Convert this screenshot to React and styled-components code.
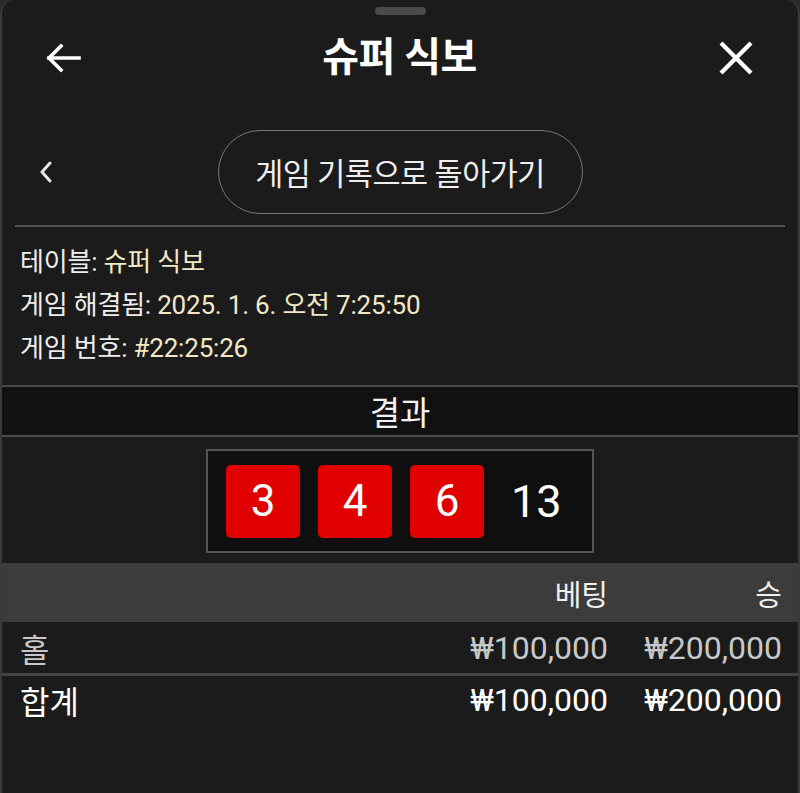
import React from "react";
import styled, { createGlobalStyle } from "styled-components";

const Global = createGlobalStyle`
  html, body { margin: 0; padding: 0; background: #2a2a2a; }
  body { font-family: Roboto, "Noto Sans CJK KR", sans-serif; }
  * { box-sizing: border-box; }
`;

const Sheet = styled.div`
  width: 800px;
  height: 793px;
  background: #1b1b1b;
  border-left: 2px solid #3a3a3a;
  border-right: 2px solid #3a3a3a;
  border-top-left-radius: 14px;
  border-top-right-radius: 14px;
  overflow: hidden;
  display: flex;
  flex-direction: column;
  color: #fff;
`;

const Handle = styled.div`
  width: 51px;
  height: 8px;
  border-radius: 4px;
  background: #4a4a4a;
  margin: 7px auto 0;
`;

const Header = styled.div`
  height: 86px;
  display: grid;
  grid-template-columns: 90px 1fr 90px;
  align-items: center;
  padding: 0 44px 0 43px;
`;

const Title = styled.h1`
  margin: 0;
  text-align: center;
  font-size: 40px;
  font-weight: 700;
  color: #fff;
  letter-spacing: -0.5px;
  line-height: 1;
`;

const IconBtn = styled.div`
  display: flex;
  align-items: center;
  justify-content: ${(p) => (p.$right ? "flex-end" : "flex-start")};
`;

const BackRow = styled.div`
  position: relative;
  display: flex;
  justify-content: center;
  align-items: center;
  padding: 29px 0 11px;
  margin: 0 13px;
  border-bottom: 2px solid #555;
`;

const Chevron = styled.div`
  position: absolute;
  left: 24px;
  top: calc(50% + 9px);
  transform: translateY(-50%);
  display: flex;
`;

const Pill = styled.div`
  width: 365px;
  height: 84px;
  border: 1.5px solid #777;
  border-radius: 42px;
  display: flex;
  align-items: center;
  justify-content: center;
  font-size: 30.5px;
  color: #eee;
  letter-spacing: -0.5px;
`;

const Info = styled.div`
  padding: 14px 18px 15px;
  display: flex;
  flex-direction: column;
  border-bottom: 2px solid #4a4a4a;
`;

const InfoLine = styled.div`
  font-size: 26px;
  line-height: 43px;
  color: #eee;
  letter-spacing: -0.2px;
`;

const Value = styled.span`
  color: #f2e8c6;
`;

const ResultBar = styled.div`
  height: 50px;
  background: #111;
  border-bottom: 2px solid #4a4a4a;
  display: flex;
  align-items: center;
  justify-content: center;
  font-size: 33px;
  color: #f2f2f2;
`;

const DiceArea = styled.div`
  display: flex;
  justify-content: center;
  padding: 12px 0 10px;
`;

const DiceBox = styled.div`
  width: 388px;
  height: 104px;
  background: #0f0f0f;
  border: 2px solid #555;
  display: flex;
  align-items: center;
  padding: 0 18px;
  gap: 18px;
`;

const Die = styled.div`
  width: 74px;
  height: 73px;
  border-radius: 5px;
  background: #e00000;
  display: flex;
  align-items: center;
  justify-content: center;
  font-size: 44px;
  color: #fff;
`;

const Sum = styled.div`
  font-size: 45px;
  color: #fff;
  margin-left: 9px;
`;

const TableRow = styled.div`
  display: grid;
  grid-template-columns: 1fr 160px 174px;
  align-items: center;
  padding: 0 16px 0 18px;
  height: ${(p) => p.$h}px;
  background: ${(p) => p.$bg || "transparent"};
  border-bottom: ${(p) => (p.$line ? "3px solid #444" : "none")};
  color: ${(p) => p.$color};
  font-size: ${(p) => p.$fs}px;
`;

const Cell = styled.div`
  text-align: ${(p) => (p.$left ? "left" : "right")};
`;

const ArrowLeft = () => (
  <svg width="36" height="30" viewBox="0 0 36 30" fill="none" stroke="#fff" strokeWidth="3.6" strokeLinecap="square">
    <path d="M34 15 H4" />
    <path d="M16 3 L4 15 L16 27" strokeLinejoin="miter" />
  </svg>
);

const CloseIcon = () => (
  <svg width="36" height="34" viewBox="0 0 36 34" fill="none" stroke="#fff" strokeWidth="4.2">
    <path d="M3 2 L33 32" />
    <path d="M33 2 L3 32" />
  </svg>
);

const ChevronLeft = () => (
  <svg width="14" height="22" viewBox="0 0 14 22" fill="none" stroke="#e6e6e6" strokeWidth="3" strokeLinecap="round" strokeLinejoin="round">
    <path d="M11 2 L3 11 L11 20" />
  </svg>
);

export default function App() {
  return (
    <>
      <Global />
      <Sheet>
        <Handle />
        <Header>
          <IconBtn>
            <ArrowLeft />
          </IconBtn>
          <Title>슈퍼 식보</Title>
          <IconBtn $right>
            <CloseIcon />
          </IconBtn>
        </Header>
        <BackRow>
          <Chevron>
            <ChevronLeft />
          </Chevron>
          <Pill>게임 기록으로 돌아가기</Pill>
        </BackRow>
        <Info>
          <InfoLine>
            테이블: <Value>슈퍼 식보</Value>
          </InfoLine>
          <InfoLine>
            게임 해결됨: <Value>2025. 1. 6. 오전 7:25:50</Value>
          </InfoLine>
          <InfoLine>
            게임 번호: <Value>#22:25:26</Value>
          </InfoLine>
        </Info>
        <ResultBar>결과</ResultBar>
        <DiceArea>
          <DiceBox>
            <Die>3</Die>
            <Die>4</Die>
            <Die>6</Die>
            <Sum>13</Sum>
          </DiceBox>
        </DiceArea>
        <TableRow $h={59} $bg="#3c3c3c" $color="#f0f0f0" $fs={29}>
          <Cell $left></Cell>
          <Cell>베팅</Cell>
          <Cell>승</Cell>
        </TableRow>
        <TableRow $h={54} $line $color="#c8c8c8" $fs={32}>
          <Cell $left>홀</Cell>
          <Cell>₩100,000</Cell>
          <Cell>₩200,000</Cell>
        </TableRow>
        <TableRow $h={48} $color="#ffffff" $fs={32}>
          <Cell $left>합계</Cell>
          <Cell>₩100,000</Cell>
          <Cell>₩200,000</Cell>
        </TableRow>
      </Sheet>
    </>
  );
}
